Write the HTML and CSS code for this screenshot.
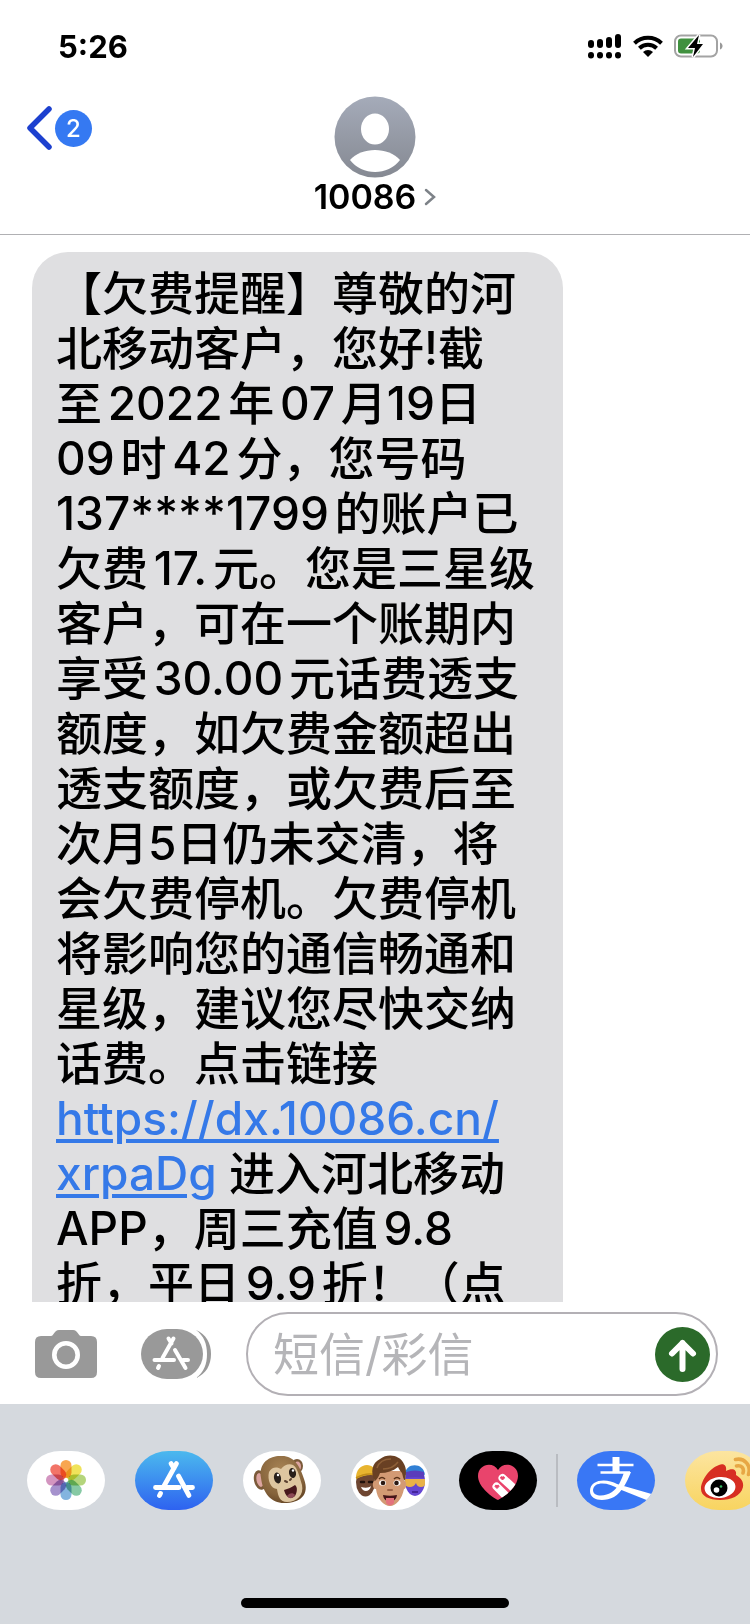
FILE: index.html
```
<!DOCTYPE html>
<html lang="zh-CN">
<head>
<meta charset="utf-8" />
<meta name="viewport" content="width=device-width,initial-scale=1.0" />
<title>10086</title>
<link rel="stylesheet" href="styles.css">
</head>
<body>
<div class="phone">

	<div class="status">
		<span class="time">5:26</span>
		<div class="status_icons">
			<svg width="34" height="26" viewBox="0 0 34 26">
				<g stroke="#000" stroke-width="6" stroke-linecap="round">
					<path d="M3 10v2M12 9v3M21 7v5M30 4v8"/>
					<path d="M3 22v.5M12 22v.5M21 22v.5M30 22v.5"/>
				</g>
			</svg>
			<svg width="30" height="22" viewBox="0 0 30 22">
				<g fill="none" stroke="#000" stroke-width="4">
					<path d="M1.500 8.200a19.500 19.500 0 0 1 27 0"/>
					<path d="M6.400 13.300a12.400 12.400 0 0 1 17.200 0"/>
				</g>
				<path d="M10 17a7.300 7.300 0 0 1 10 0l-5 5z"/>
			</svg>
			<svg width="50" height="24" viewBox="0 0 50 24">
				<rect x="1" y="1.500" width="42" height="21" rx="6" fill="#fff" stroke="#a3a3a3" stroke-width="2"/>
				<rect x="4" y="4.500" width="22" height="15" rx="3" fill="#40913f"/>
				<path d="M46 8.500c3.400 1.200 3.400 5.800 0 7z" fill="#999"/>
				<path d="M25 1L14 14h7l-2 9L29 10h-6z" stroke="#fff" stroke-width="3"/>
				<path d="M25 1L14 14h7l-2 9L29 10h-6z"/>
			</svg>
		</div>
	</div>

	<div class="nav">
		<button class="back" type="button" aria-label="返回">
			<svg width="26" height="44" viewBox="0 0 26 44"><path d="M23 3L4 22l19 19" fill="none" stroke="#1d40cf" stroke-width="5.500" stroke-linecap="round" stroke-linejoin="round"/></svg>
			<span class="count">2</span>
		</button>
		<button class="contact" type="button">
			<svg width="82" height="82" viewBox="0 0 82 82">
				<defs>
					<linearGradient id="gray" x2="0" y2="1"><stop stop-color="#a5abb9"/><stop offset="1" stop-color="#858992"/></linearGradient>
				</defs>
				<circle cx="41" cy="41" r="40.500" fill="url(#gray)"/>
				<ellipse cx="41" cy="33" rx="14" ry="15.500" fill="#fff"/>
				<path d="M16 64c11-13.500 39-13.500 50 0-12 16-38 16-50 0z" fill="#fff"/>
			</svg>
			<span class="name">10086
				<svg width="12" height="18" viewBox="0 0 12 18"><path d="M2 2l8 7-8 7" fill="none" stroke="#7d8288" stroke-width="2.500" stroke-linecap="round"/></svg>
			</span>
		</button>
	</div>

	<div class="messages">
		<p class="bubble">【欠费提醒】尊敬的河<br>北移动客户，您<span class="tight">好!截</span><br>至2022年07月<span class="tight">19日</span><br>09时42分，您号码<br>137****1799的账户已<br>欠费17.元。您是三星级<br>客户，可在一个账期内<br>享受30.00元话费透支<br>额度，如欠费金额超出<br>透支额度，或欠费后至<br>次月<span class="tight">5日</span>仍未交清，将<br>会欠费停机。欠费停机<br>将影响您的通信畅通和<br>星级，建议您尽快交纳<br>话费。点击链接<br><a href="#">https://dx.10086.cn/<br>xrpaDg</a> 进入河北移动<br>APP，周三充值9.8<br>折，平日9.9折！（点</p>
	</div>

	<form class="composer">
		<button type="button" aria-label="相机">
			<svg width="62" height="48" viewBox="0 0 62 48">
				<path d="M6 6h10c3 0 3-6 8-6h14c5 0 5 6 8 6h10q6 0 6 6v30q0 6-6 6H6q-6 0-6-6V12q0-6 6-6z" fill="#999"/>
				<circle cx="31" cy="25" r="11.700" fill="none" stroke="#fff" stroke-width="4.600"/>
			</svg>
		</button>
		<button type="button" aria-label="应用">
			<svg width="70" height="50" viewBox="0 0 70 50">
				<rect width="62" height="50" rx="26" ry="25" fill="#999"/>
				<path d="M55 1c10 4 15 13 15 24s-5 20-15 24c8-6 11-14 11-24S63 7 55 1z" fill="#999"/>
				<g fill="none" stroke="#fff" stroke-width="4" stroke-linecap="round">
					<path d="M32.500 9.500L21.500 29M27.500 9.500l3 5M34 21l10.500 18M13.500 31H33M42 31h5M18 37l-1 2"/>
				</g>
			</svg>
		</button>
		<div class="field">
			<input type="text" placeholder="短信/彩信" aria-label="短信/彩信">
			<button class="send" type="button" aria-label="发送">
				<svg width="55" height="55" viewBox="0 0 55 55">
					<circle cx="27.500" cy="27.500" r="27.500" fill="#2b6a2a"/>
					<path d="M27.500 42V16M17 26.500L27.500 16 38 26.500" fill="none" stroke="#fff" stroke-width="6" stroke-linecap="round" stroke-linejoin="round"/>
				</svg>
			</button>
		</div>
	</form>

	<div class="dock">
		<div class="apps">
			<!-- photos -->
			<button class="app" type="button" aria-label="照片">
				<svg width="78" height="59" viewBox="0 0 78 59">
					<g class="petals" transform="translate(39 29)">
						<rect x="-5.500" y="-20" width="11" height="18" rx="5.500" fill="#f8a650"/>
						<rect x="-5.500" y="-20" width="11" height="18" rx="5.500" fill="#f0e35a" transform="rotate(45)"/>
						<rect x="-5.500" y="-20" width="11" height="18" rx="5.500" fill="#b4d57c" transform="rotate(90)"/>
						<rect x="-5.500" y="-20" width="11" height="18" rx="5.500" fill="#86c9a4" transform="rotate(135)"/>
						<rect x="-5.500" y="-20" width="11" height="18" rx="5.500" fill="#83b4df" transform="rotate(180)"/>
						<rect x="-5.500" y="-20" width="11" height="18" rx="5.500" fill="#a592cd" transform="rotate(225)"/>
						<rect x="-5.500" y="-20" width="11" height="18" rx="5.500" fill="#d395c0" transform="rotate(270)"/>
						<rect x="-5.500" y="-20" width="11" height="18" rx="5.500" fill="#f27468" transform="rotate(315)"/>
					</g>
				</svg>
			</button>
			<!-- app store -->
			<button class="app store" type="button" aria-label="App Store">
				<svg width="78" height="59" viewBox="0 0 78 59">
					<path d="M41.500 12.500L29 35M36 12.500l3 5M43.500 25L54 44.500M20.500 36.500H44M52 36.500h5.500M25.500 42.500l-1 2" fill="none" stroke="#fff" stroke-width="4.800" stroke-linecap="round"/>
				</svg>
			</button>
			<!-- animoji -->
			<button class="app" type="button" aria-label="拟我表情">
				<svg width="78" height="59" viewBox="0 0 78 59">
					<defs>
						<radialGradient id="fur" cx=".45" cy=".3" r=".75"><stop stop-color="#a78354"/><stop offset=".7" stop-color="#85633b"/><stop offset="1" stop-color="#654525"/></radialGradient>
					</defs>
					<ellipse cx="17" cy="29" rx="6" ry="10" fill="#7b5a39" transform="rotate(-12 17 29)"/>
					<ellipse cx="17" cy="29" rx="3.500" ry="7" fill="#dca4a0" transform="rotate(-12 17 29)"/>
					<ellipse cx="54" cy="15" rx="6" ry="7" fill="#7b5a39"/>
					<ellipse cx="54.500" cy="15.500" rx="3.500" ry="5" fill="#dca4a0"/>
					<path d="M18 27C15 10 29 4 39 5c12 0 18 10 22 23 6 16-4 24-20 24-13 0-21-10-23-25z" fill="url(#fur)"/>
					<path d="M26 21c3-6 9-5 12-3 4-5 11-7 15-1 3 5 4 11 6 17 2 10-5 17-15 17-7 0-9-6-10-13-6 0-10-9-8-17z" fill="#dec6a0"/>
					<ellipse cx="34.500" cy="27" rx="3.500" ry="5.500" fill="#29201b" transform="rotate(-12 34.500 27)"/>
					<ellipse cx="49.500" cy="22" rx="3.500" ry="5" fill="#29201b" transform="rotate(-12 49.500 22)"/>
					<circle cx="35" cy="24" r="1.200" fill="#fff"/>
					<circle cx="50" cy="19.500" r="1.200" fill="#fff"/>
					<path d="M42 30l2 1M47 29l1-1" stroke="#5b4030" stroke-width="2" stroke-linecap="round"/>
					<path d="M41 39c4-1 8-3 11-5 3 2 2 8 0 11-4 4-9 2-11-6z" fill="#48181c"/>
					<path d="M44 45c2-3 6-4 8-1-2 4-6 4-8 1z" fill="#8c4a55"/>
				</svg>
			</button>
			<!-- memoji -->
			<button class="app" type="button" aria-label="拟我表情贴纸">
				<svg width="78" height="59" viewBox="0 0 78 59">
					<ellipse cx="14.500" cy="31" rx="9.500" ry="14.500" fill="#6e4631"/>
					<path d="M5 28c-1-17 20-19 21-3-6-2-13-1-21 3z" fill="#e8b42f"/>
					<path d="M5 27c7-4 14-5 20-3" stroke="#c28d18" stroke-width="1.500" fill="none"/>
					<path d="M10 31h3M18 31h3" stroke="#20120d" stroke-width="2.500" stroke-linecap="round"/>
					<path d="M10 36c4 1 8 1 10-1-1 6-8 7-10 1z" fill="#fff"/>
					<ellipse cx="64" cy="30" rx="10" ry="15" fill="#6547d2"/>
					<path d="M54 24c0-13 19-13 20 0-6-3-13-3-20 0z" fill="#3180d5"/>
					<path d="M55 21c6-2 12-2 18 0v6c-6-1-12-1-18 0z" fill="#5a3dbb"/>
					<path d="M54 28h20v5q0 3-4 3-4 0-5-4-2 4-6 4-5 0-5-4z" fill="#e9b248"/>
					<path d="M61 41h6" stroke="#44249c" stroke-width="2"/>
					<path d="M24 20h29v10c3-1 3 8 0 8-2 10-8 17-14 17s-13-7-14-17c-4 1-4-9-1-8z" fill="#d39a74"/>
					<path d="M24 30C19 21 21 12 29 8 37 2 49 4 53 13c3 5 2 11 1 17-2-2-2-5-3-8-2-2-3-4-4-6-5 4-11 6-18 6-1 3-2 5-5 8z" fill="#694023"/>
					<path d="M26 17c2-6 7-9 14-9M32 18c6 0 12-3 15-7" stroke="#8d5f37" stroke-width="1.500" fill="none"/>
					<path d="M28 28c2-2 4-2 6 0M43 28c2-2 4-2 6 0" stroke="#583017" stroke-width="1.500" fill="none"/>
					<ellipse cx="31.500" cy="32" rx="3.500" ry="2.700" fill="#fff"/><circle cx="32" cy="32" r="2.300" fill="#2a1812"/>
					<ellipse cx="46" cy="32" rx="3.500" ry="2.700" fill="#fff"/><circle cx="45.500" cy="32" r="2.300" fill="#2a1812"/>
					<path d="M37 39h4" stroke="#9d6347" stroke-width="2" stroke-linecap="round"/>
					<path d="M32 44c5 1 9 1 14 0-1 9-13 9-14 0z" fill="#451519"/>
					<path d="M35 47h8v5q-4 5-8 0z" fill="#e3727c"/>
				</svg>
			</button>
			<!-- digital touch -->
			<button class="app touch" type="button" aria-label="Digital Touch">
				<svg width="78" height="59" viewBox="0 0 78 59">
					<defs><clipPath id="heart"><path d="M39 49C31 45 19 35 19 25c0-12 15-15 20-6 5-9 20-6 20 6 0 10-12 20-20 24z"/></clipPath></defs>
					<g clip-path="url(#heart)">
						<rect width="78" height="59" fill="#e9446c"/>
						<path d="M43.500 27L62 44M37.500 35.500L54 52" stroke="#fff" stroke-width="8" stroke-linecap="round"/>
						<path d="M43.500 29l-2-2q0-2 2-1 2-1 2 1zM38 37.500l-2-2q0-2 2-1 2-1 2 1z" fill="#e9446c" stroke="#e9446c"/>
					</g>
				</svg>
			</button>
		</div>
		<span class="line"></span>
		<div class="apps">
			<!-- alipay -->
			<button class="app alipay" type="button" aria-label="支付宝">
				<svg width="78" height="59" viewBox="0 0 78 59">
					<path d="M35.500 6h7v15h-7z" fill="#fff"/>
					<path d="M20.500 14h36M23.500 21.500H53" stroke="#fff" stroke-width="2.600"/>
					<path d="M47 21h7c-4 10-9 20-17 25-10 5-24 4-24-6 0-12 17-13 27-7L78 44l-6 6-30-12C31 31 17 30 16 39c0 7 12 7 19 2 6-4 10-13 12-20z" fill="#fff"/>
				</svg>
			</button>
			<!-- weibo -->
			<button class="app weibo" type="button" aria-label="微博">
				<svg width="78" height="59" viewBox="0 0 78 59">
					<path d="M16 38c0-9 9-21 18-24 5-2 8 1 7 6 6-3 11-2 10 4 5 3 8 7 7 12-2 9-12 13-23 13-11 0-19-4-19-11z" fill="#d72e22"/>
					<ellipse cx="35" cy="36.500" rx="15.500" ry="10.500" fill="#fff" transform="rotate(-6 35 36.500)"/>
					<circle cx="34" cy="37" r="8.500"/>
					<circle cx="31.500" cy="39" r="2.800" fill="#fff"/><circle cx="36" cy="35.500" r="1.300" fill="#35bb63"/>
					<g fill="none" stroke="#e7a744" stroke-width="3.600" stroke-linecap="round"><path d="M50.500 8.500c9-2 16 6 13 15M51.500 15c5-1 8 2 6.500 7"/></g>
				</svg>
			</button>
		</div>
		<div class="home"></div>
	</div>

</div>
</body>
</html>
```
FILE: styles.css
```
*{
	box-sizing:border-box;
}
body{
	margin:0;
	background:#fff;
	color:#000;
	font-family:Inter,"Noto Sans CJK SC",sans-serif;
}
button{
	padding:0;
	border:0;
	background:none;
	color:inherit;
	font:inherit;
	cursor:pointer;
}
svg{
	display:block;
}
.phone{
	display:flex;
	flex-direction:column;
	height:100vh;
	overflow:hidden;
}

/* status bar */
.status{
	display:flex;
	flex:none;
	justify-content:space-between;
	align-items:center;
	height:92px;
	padding:0 26px 0 58px;
}
.time{
	font-size:31px;
	font-weight:700;
}
.status_icons{
	display:flex;
	align-items:center;
	gap:11px;
}

/* nav */
.nav{
	display:grid;
	flex:none;
	grid-template-columns:1fr auto 1fr;
	align-items:start;
	padding:4px 26px 18px;
	border-bottom:1px solid #b0b0b3;
}
.back{
	display:flex;
	align-items:center;
	gap:3px;
	margin-top:10px;
}
.count{
	width:37px;
	border-radius:50%;
	background:#3579f2;
	color:#fff;
	font-size:24px;
	font-weight:500;
	line-height:37px;
}
.contact{
	display:flex;
	flex-direction:column;
	align-items:center;
}
.name{
	display:flex;
	align-items:center;
	gap:8px;
	font-size:34px;
	font-weight:600;
	line-height:38px;
}

/* messages */
.messages{
	flex:1;
	min-height:0;
	padding:17px 32px 0;
	overflow:hidden;
}
.bubble{
	width:fit-content;
	min-width:531px;
	margin:0;
	padding:14px 24px 60px;
	border-radius:36px;
	background:#dfdfe1;
	font-size:46px;
	font-weight:500;
	line-height:55px;
	white-space:nowrap;
	text-autospace:normal;
	text-spacing-trim:space-all;
}
.bubble .tight{
	text-autospace:no-autospace;
}
.bubble a{
	color:#3579e8;
	text-decoration-thickness:4px;
	text-underline-offset:4px;
}

/* input row */
.composer{
	display:flex;
	flex:none;
	align-items:center;
	height:102px;
	padding:2px 32px 0 35px;
}
.composer > button + button{
	margin-left:44px;
}
.field{
	display:flex;
	flex:1;
	align-items:center;
	min-width:0;
	height:84px;
	margin-left:35px;
	padding:0 6px 0 25px;
	border:2px solid #b3b0b5;
	border-radius:42px;
}
.field input{
	flex:1;
	min-width:0;
	padding:0;
	border:0;
	outline:0;
	background:none;
	font:inherit;
	font-size:46px;
}
.field input::placeholder{
	color:#b5b5b8;
}

/* app strip */
.dock{
	display:flex;
	position:relative;
	flex:none;
	align-items:flex-start;
	height:220px;
	padding:47px 0 0 27px;
	overflow:hidden;
	background:#d5d9de;
}
.apps{
	display:flex;
	flex:none;
	gap:30px;
}
.app{
	flex:none;
	width:78px;
	height:59px;
	border-radius:34px / 30px;
	background:#fff;
	overflow:hidden;
}
.petals rect{
	mix-blend-mode:multiply;
}
.store{
	background:linear-gradient(#4bb9ee,#2e62f0);
}
.touch{
	background:#000;
}
.alipay{
	background:#3977f5;
}
.weibo{
	background:linear-gradient(#fce5a0,#f8d460);
}
.line{
	flex:none;
	width:2px;
	height:53px;
	margin:3px 19px;
	background:#b9bcc1;
}
.home{
	position:absolute;
	bottom:16px;
	left:50%;
	width:268px;
	height:10px;
	border-radius:5px;
	background:#000;
	transform:translateX(-50%);
}
```
